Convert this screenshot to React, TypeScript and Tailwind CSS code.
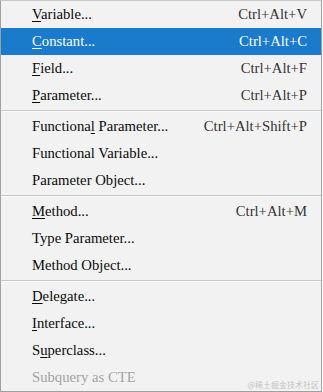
import React from "react";

type Item = { pre: string; u?: string; post?: string; sc?: string; active?: boolean; disabled?: boolean };

const groups: Item[][] = [
  [
    { pre: "", u: "V", post: "ariable...", sc: "Ctrl+Alt+V" },
    { pre: "", u: "C", post: "onstant...", sc: "Ctrl+Alt+C", active: true },
    { pre: "", u: "F", post: "ield...", sc: "Ctrl+Alt+F" },
    { pre: "", u: "P", post: "arameter...", sc: "Ctrl+Alt+P" },
  ],
  [
    { pre: "Functiona", u: "l", post: " Parameter...", sc: "Ctrl+Alt+Shift+P" },
    { pre: "Functional Variable..." },
    { pre: "Parameter Object..." },
  ],
  [
    { pre: "", u: "M", post: "ethod...", sc: "Ctrl+Alt+M" },
    { pre: "Type Parameter..." },
    { pre: "Method Object..." },
  ],
  [
    { pre: "", u: "D", post: "elegate..." },
    { pre: "", u: "I", post: "nterface..." },
    { pre: "S", u: "u", post: "perclass..." },
    { pre: "Subquery as CTE", disabled: true },
  ],
];

function Row({ it }: { it: Item }) {
  const base = it.active
    ? "bg-[#1a7acb] text-white"
    : it.disabled
    ? "text-[#a3a3a3]"
    : "text-[#0a0a0a]";
  return (
    <div className={`flex h-[27px] items-center justify-between pl-[31px] pr-[14px] ${base}`}>
      <span>
        {it.pre}
        {it.u && <span className="underline underline-offset-[2px]">{it.u}</span>}
        {it.post}
      </span>
      {it.sc && <span className={it.active ? "text-white" : "text-[#333333]"}>{it.sc}</span>}
    </div>
  );
}

export default function App() {
  return (
    <div className="w-[323px] h-[392px] bg-white">
      <div className="relative h-[392px] w-[322px] border border-[#a0a0a0] border-t-[#c8c8c8] bg-[#f2f2f2] font-['Liberation_Serif','Times_New_Roman',serif] text-[14.7px] leading-none">
        {groups.map((g, gi) => (
          <div key={gi}>
            {gi > 0 && (
              <div className="h-[4px] pt-[1px]">
                <div className="h-px bg-[#c9c9c9]" />
                <div className="h-px bg-[#fafafa]" />
              </div>
            )}
            {g.map((it, i) => (
              <Row key={i} it={it} />
            ))}
          </div>
        ))}
        <div className="absolute right-[2px] bottom-[2px] font-['Noto_Sans_CJK_SC',sans-serif] text-[8px] leading-none text-[#c4c4c4]">
          @稀土掘金技术社区
        </div>
      </div>
    </div>
  );
}
